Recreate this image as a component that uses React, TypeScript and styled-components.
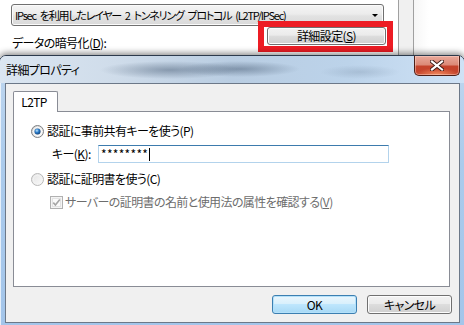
import React from "react";
import styled, { createGlobalStyle } from "styled-components";

const GlobalStyle = createGlobalStyle`
  html, body { margin: 0; padding: 0; background: #ffffff; }
  * { box-sizing: border-box; }
`;

const Screen = styled.div`
  width: 464px;
  height: 325px;
  overflow: hidden;
  position: relative;
  background: #ffffff;
  font-family: "Noto Sans CJK JP", "Noto Sans", sans-serif;
  font-size: 12px;
  line-height: 14px;
  letter-spacing: -0.6px;
  font-feature-settings: "palt";
  color: #000;
  display: flex;
  flex-direction: column;
`;

/* ---------- back window ---------- */
const BackWindow = styled.div`
  height: 55px;
  flex: none;
  display: flex;
`;

const BackMain = styled.div`
  width: 398px;
  padding: 4px 5px 0 11px;
  display: flex;
  flex-direction: column;
  background: #ffffff;
`;

const Select = styled.div`
  width: 373px;
  height: 22px;
  border: 1px solid #707070;
  border-radius: 3px;
  background: linear-gradient(#f4f4f4 0%, #ececec 45%, #e2e2e2 55%, #d9d9d9 100%);
  box-shadow: inset 0 0 0 1px #fbfbfb;
  display: flex;
  align-items: center;
  justify-content: space-between;
  padding: 0 5px 0 3px;
  white-space: nowrap;
`;

const SelectText = styled.span`
  font-size: 11px;
  letter-spacing: -1.2px;
  word-spacing: 2.5px;
`;

const Arrow = styled.span`
  width: 0;
  height: 0;
  border-left: 3px solid transparent;
  border-right: 3px solid transparent;
  border-top: 3px solid #000;
  margin-top: 1px;
`;

const BackRow = styled.div`
  margin-top: -5px;
  display: flex;
  justify-content: space-between;
  align-items: flex-end;
`;

const BackLabel = styled.span`
  margin-left: 1px;
  margin-bottom: 2px;
  white-space: nowrap;
`;

const Highlight = styled.div`
  position: relative;
  width: 135px;
  height: 31px;
  border: 6px solid #ed1c24;
  padding: 0 1px 1px 3px;
  display: flex;
`;

const SideStrip = styled.div`
  width: 16px;
  flex: none;
  background: #f0f0f0;
  border-left: 1px solid #a0a0a0;
  border-right: 1px solid #a0a0a0;
`;

const BackRest = styled.div`
  flex: 1;
  background: linear-gradient(to right, #f6f6f6, #ffffff 30%);
`;

/* ---------- buttons ---------- */
const Button = styled.div<{ $default?: boolean; $w?: number; $h?: number }>`
  width: ${(p) => (p.$w ? `${p.$w}px` : "100%")};
  height: ${(p) => (p.$h ? `${p.$h}px` : "100%")};
  border: 1px solid ${(p) => (p.$default ? "#3c7fb1" : "#707070")};
  border-radius: 3px;
  background: ${(p) =>
    p.$default
      ? "linear-gradient(#eaf6fd 0%, #d9f0fc 45%, #bee6fd 50%, #a7d9f5 100%)"
      : "linear-gradient(#f2f2f2 0%, #ebebeb 45%, #dddddd 50%, #cfcfcf 100%)"};
  box-shadow: inset 0 0 0 1px ${(p) => (p.$default ? "#b4e1fa" : "#fcfcfc")};
  display: flex;
  align-items: center;
  justify-content: center;
  white-space: nowrap;
`;

/* ---------- dialog ---------- */
const Dialog = styled.div`
  position: relative;
  height: 272px;
  flex: none;
  margin: 0 -1px;
  border: 1px solid #2c3a4c;
  border-radius: 7px 7px 0 0;
  background: linear-gradient(to bottom, #c0d7ef 0%, #abcbec 40%, #a3c5ea 100%);
  box-shadow: 0 -2px 6px rgba(0, 0, 0, 0.45), inset 1px 1px 0 rgba(255, 255, 255, 0.7);
  padding: 0 4px 3px 5px;
  display: flex;
  flex-direction: column;
`;

const TitleBar = styled.div`
  height: 27px;
  flex: none;
  margin: 0 -4px 0 -5px;
  padding: 0 4px 0 6px;
  border-radius: 6px 6px 0 0;
  display: flex;
  justify-content: space-between;
  align-items: flex-start;
  background:
    radial-gradient(ellipse 70px 9px at 170px 14px, rgba(60, 80, 105, 0.45), transparent),
    radial-gradient(ellipse 60px 8px at 240px 13px, rgba(60, 80, 105, 0.45), transparent),
    radial-gradient(ellipse 40px 7px at 360px 16px, rgba(80, 100, 125, 0.2), transparent),
    linear-gradient(to right, #dbe6f1 0%, #cfdcea 25%, #b9cde2 50%, #bcd3ea 75%, #cfe2f6 100%);
`;

const Title = styled.span`
  margin-top: 7px;
  white-space: nowrap;
`;

const CloseButton = styled.div`
  width: 46px;
  height: 20px;
  border: 1px solid #4d1e16;
  border-top: none;
  border-radius: 0 0 5px 5px;
  background:
    radial-gradient(ellipse 22px 7px at 50% 100%, rgba(255, 160, 110, 0.8), transparent),
    linear-gradient(#e9a99b 0%, #dc8a78 45%, #c5432c 55%, #c4432b 100%);
  box-shadow: inset 0 0 0 1px rgba(255, 220, 210, 0.45);
  display: flex;
  align-items: center;
  justify-content: center;
`;

const Client = styled.div`
  flex: 1;
  background: #f0f0f0;
  border: 1px solid #6c7888;
  padding: 7px 7px 7px 7px;
  display: flex;
  flex-direction: column;
`;

const TabStrip = styled.div`
  display: flex;
  height: 20px;
`;

const Tab = styled.div`
  width: 45px;
  height: 21px;
  background: #ffffff;
  border: 1px solid #898c95;
  border-bottom: none;
  border-radius: 2px 2px 0 0;
  display: flex;
  align-items: center;
  justify-content: center;
  padding-right: 3px;
  position: relative;
  z-index: 1;
`;

const TabPanel = styled.div`
  width: 437px;
  height: 176px;
  background: #ffffff;
  border: 1px solid #898c95;
  padding: 11px 0 0 17px;
  display: flex;
  flex-direction: column;
`;

const OptionRow = styled.div<{ $mt?: number }>`
  display: flex;
  align-items: center;
  height: 16px;
  gap: 3px;
  margin-top: ${(p) => p.$mt ?? 0}px;
  white-space: nowrap;
`;

const KeyRow = styled.div`
  display: flex;
  align-items: center;
  height: 18px;
  margin-top: 6px;
  padding-left: 21px;
`;

const KeyLabel = styled.span`
  width: 46px;
  white-space: nowrap;
`;

const Input = styled.div`
  width: 291px;
  height: 18px;
  border: 1px solid #b3d3ec;
  border-top-color: #3d7bad;
  background: #fff;
  display: flex;
  align-items: center;
  padding-left: 2px;
  letter-spacing: 0.3px;
`;

const Caret = styled.span`
  display: inline-block;
  width: 1px;
  height: 13px;
  background: #000;
  margin-left: 1px;
`;

const CheckRow = styled.div`
  display: flex;
  align-items: center;
  height: 16px;
  margin-top: 7px;
  padding-left: 19px;
  gap: 2px;
  color: #6d6d6d;
  white-space: nowrap;
`;

const ButtonRow = styled.div`
  margin-top: 8px;
  display: flex;
  justify-content: flex-end;
  gap: 10px;
`;

const U = styled.span`
  text-decoration: underline;
  text-underline-offset: 1px;
`;

const RadioIcon = ({ checked, id }: { checked?: boolean; id: string }) => (
  <svg width="13" height="13" viewBox="0 0 13 13">
    <defs>
      <linearGradient id={`rb${id}`} x1="0" y1="0" x2="1" y2="1">
        <stop offset="0" stopColor={checked ? "#cfcfcf" : "#e2e2e2"} />
        <stop offset="1" stopColor="#fbfbfb" />
      </linearGradient>
      <radialGradient id={`rd${id}`} cx="0.4" cy="0.35" r="0.7">
        <stop offset="0" stopColor="#bfe4fb" />
        <stop offset="0.45" stopColor="#2f7fcb" />
        <stop offset="1" stopColor="#0b3a73" />
      </radialGradient>
    </defs>
    <circle
      cx="6.5"
      cy="6.5"
      r="6"
      fill={`url(#rb${id})`}
      stroke={checked ? "#7e8184" : "#b8b8b8"}
    />
    <circle cx="6.5" cy="6.5" r="4.2" fill="none" stroke={checked ? "#ffffff" : "#f4f4f4"} strokeWidth="0.8" />
    {checked && <circle cx="6.5" cy="6.5" r="3" fill={`url(#rd${id})`} />}
  </svg>
);

const CheckIcon = () => (
  <svg width="13" height="13" viewBox="0 0 13 13">
    <rect x="0.5" y="0.5" width="12" height="12" fill="#f4f4f4" stroke="#b1b1b1" />
    <rect x="2.5" y="2.5" width="8" height="8" fill="#fbfbfb" stroke="#e3e3e3" />
    <path d="M3.3 6.6 L5.4 9 L9.8 3.4" fill="none" stroke="#a6a6a6" strokeWidth="1.6" />
  </svg>
);

const CloseX = () => (
  <svg width="14" height="11" viewBox="0 0 14 11">
    <path d="M2 1.5 L12 9.5 M12 1.5 L2 9.5" stroke="#3b1a14" strokeWidth="4" strokeLinecap="square" />
    <path d="M2 1.5 L12 9.5 M12 1.5 L2 9.5" stroke="#ffffff" strokeWidth="2.2" strokeLinecap="square" />
  </svg>
);

export default function App() {
  return (
    <>
      <GlobalStyle />
      <Screen>
        <BackWindow>
          <BackMain>
            <Select>
              <SelectText>IPsec を利用したレイヤー 2 トンネリング プロトコル (L2TP/IPSec)</SelectText>
              <Arrow />
            </Select>
            <BackRow>
              <BackLabel>
                データの暗号化(<U>D</U>):
              </BackLabel>
              <Highlight>
                <Button>
                  詳細設定(<U>S</U>)
                </Button>
              </Highlight>
            </BackRow>
          </BackMain>
          <SideStrip />
          <BackRest />
        </BackWindow>

        <Dialog>
          <TitleBar>
            <Title>詳細プロパティ</Title>
            <CloseButton>
              <CloseX />
            </CloseButton>
          </TitleBar>
          <Client>
            <TabStrip>
              <Tab>L2TP</Tab>
            </TabStrip>
            <TabPanel>
              <OptionRow $mt={0}>
                <RadioIcon checked id="a" />
                <span>認証に事前共有キーを使う(P)</span>
              </OptionRow>
              <KeyRow>
                <KeyLabel>
                  キー(<U>K</U>):
                </KeyLabel>
                <Input>
                  ********
                  <Caret />
                </Input>
              </KeyRow>
              <OptionRow $mt={8}>
                <RadioIcon id="b" />
                <span>認証に証明書を使う(C)</span>
              </OptionRow>
              <CheckRow>
                <CheckIcon />
                <span>
                  サーバーの証明書の名前と使用法の属性を確認する(<U>V</U>)
                </span>
              </CheckRow>
            </TabPanel>
            <ButtonRow>
              <Button $default $w={85} $h={19}>
                OK
              </Button>
              <Button $w={85} $h={19}>
                キャンセル
              </Button>
            </ButtonRow>
          </Client>
        </Dialog>
      </Screen>
    </>
  );
}
